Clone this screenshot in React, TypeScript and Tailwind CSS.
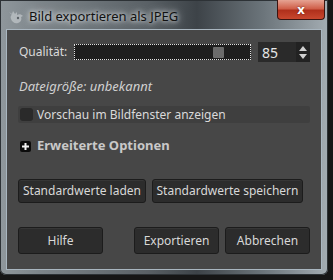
import React from 'react'

const font = { fontFamily: '"Noto Sans", "Open Sans", sans-serif' }

function Wilber() {
  return (
    <svg width="16" height="14" viewBox="0 0 16 14" className="shrink-0">
      <path
        d="M1 2 L4 4 L5 1 L7 4 L9 2 L9 5 C11 4 13 4 15 6 L13 7 C14 9 13 12 10 13 C7 14 4 12 3 9 C2 7 3 5 4 5 Z"
        fill="#b9bec2"
        opacity="0.85"
      />
      <circle cx="10" cy="8" r="1.2" fill="#5d6368" />
    </svg>
  )
}

function Btn({ label, className }: { label: string; className: string }) {
  return (
    <button
      type="button"
      className={`flex items-center justify-center rounded-[3px] border border-[#1c1c1c] bg-[#2c2c2c] text-[12px] text-[#d8d8d8] shadow-[inset_0_1px_0_#363636] ${className}`}
    >
      {label}
    </button>
  )
}

export default function App() {
  return (
    <div className="h-[280px] w-[333px] overflow-hidden bg-[#161616]" style={font}>
      <div className="relative h-[275px] w-[328px] rounded-b-[6px] bg-[linear-gradient(to_right,#8f979c_0%,#7d858a_12%,#5a6166_45%,#3d4348_60%,#6b747a_80%,#a3acb2_100%)] px-[6px] pb-[5px] pt-[29px] shadow-[inset_0_0_0_1px_#2d3236]">
        {/* title */}
        <div className="absolute left-[8px] top-[7px] flex items-center gap-[5px]">
          <Wilber />
          <span className="text-[13px] text-[#111] [text-shadow:0_0_8px_#e8ecef,0_0_4px_#e8ecef]">
            Bild exportieren als JPEG
          </span>
        </div>
        <div className="absolute right-[3px] top-0 flex h-[20px] w-[48px] items-center justify-center rounded-b-[4px] border border-t-0 border-[#3b1410] bg-[linear-gradient(to_bottom,#e6a393_0%,#d0604a_45%,#b0301c_55%,#c8472e_100%)]">
          <span className="text-[13px] font-bold leading-none text-white [text-shadow:0_0_2px_#5a1a10]">x</span>
        </div>

        {/* content */}
        <div className="h-full w-full border border-[#a9b6c0] bg-[#474747] px-[11px] pt-[12px] text-[12px] text-[#dadada]">
          <div className="flex h-[20px] items-center">
            <span className="w-[56px] pl-[1px]">Qualität:</span>
            <div className="relative h-[16px] w-[177px] border border-dotted border-[#e0e0e0] bg-[#1e1e1e]">
              <div className="absolute left-[138px] top-[2px] h-[11px] w-[11px] rounded-[1px] bg-[#6b6b6b]" />
            </div>
            <div className="ml-[7px] flex h-[20px] w-[52px]">
              <div className="flex flex-1 items-center bg-[#2a2a2a] pl-[4px] text-[14px] text-[#e6e6e6]">85</div>
              <div className="flex w-[14px] flex-col items-center justify-center gap-[3px] bg-[#222]">
                <svg width="8" height="5" viewBox="0 0 8 5">
                  <path d="M0 5 L4 0 L8 5 Z" fill="#d0d0d0" />
                </svg>
                <svg width="8" height="5" viewBox="0 0 8 5">
                  <path d="M0 0 L4 5 L8 0 Z" fill="#d0d0d0" />
                </svg>
              </div>
            </div>
          </div>

          <div className="mt-[16px] pl-[1px] text-[13px] italic leading-[16px] text-[#d0d0d0]">Dateigröße: unbekannt</div>

          <div className="mt-[12px] flex h-[17px] items-center rounded-[2px] bg-[#3f3f3f] pl-[2px]">
            <div className="h-[13px] w-[13px] rounded-[3px] bg-[#2a2a2a]" />
            <span className="ml-[4px]">Vorschau im Bildfenster anzeigen</span>
          </div>

          <div className="mt-[15px] flex h-[16px] items-center pl-[2px]">
            <div className="flex h-[11px] w-[11px] items-center justify-center rounded-[2px] bg-[#0c0c0c]">
              <svg width="7" height="7" viewBox="0 0 7 7">
                <path d="M2.5 0 H4.5 V2.5 H7 V4.5 H4.5 V7 H2.5 V4.5 H0 V2.5 H2.5 Z" fill="#f2f2f2" />
              </svg>
            </div>
            <span className="ml-[6px] text-[13px] font-bold text-[#c9c9c9]">Erweiterte Optionen</span>
          </div>

          <div className="mt-[25px] flex gap-[6px]">
            <Btn label="Standardwerte laden" className="h-[24px] w-[128px]" />
            <Btn label="Standardwerte speichern" className="h-[24px] w-[151px]" />
          </div>

          <div className="mt-[24px] flex">
            <Btn label="Hilfe" className="h-[27px] w-[85px]" />
            <Btn label="Exportieren" className="ml-[31px] h-[27px] w-[85px]" />
            <Btn label="Abbrechen" className="ml-[6px] h-[27px] w-[85px]" />
          </div>
        </div>
      </div>
    </div>
  )
}
